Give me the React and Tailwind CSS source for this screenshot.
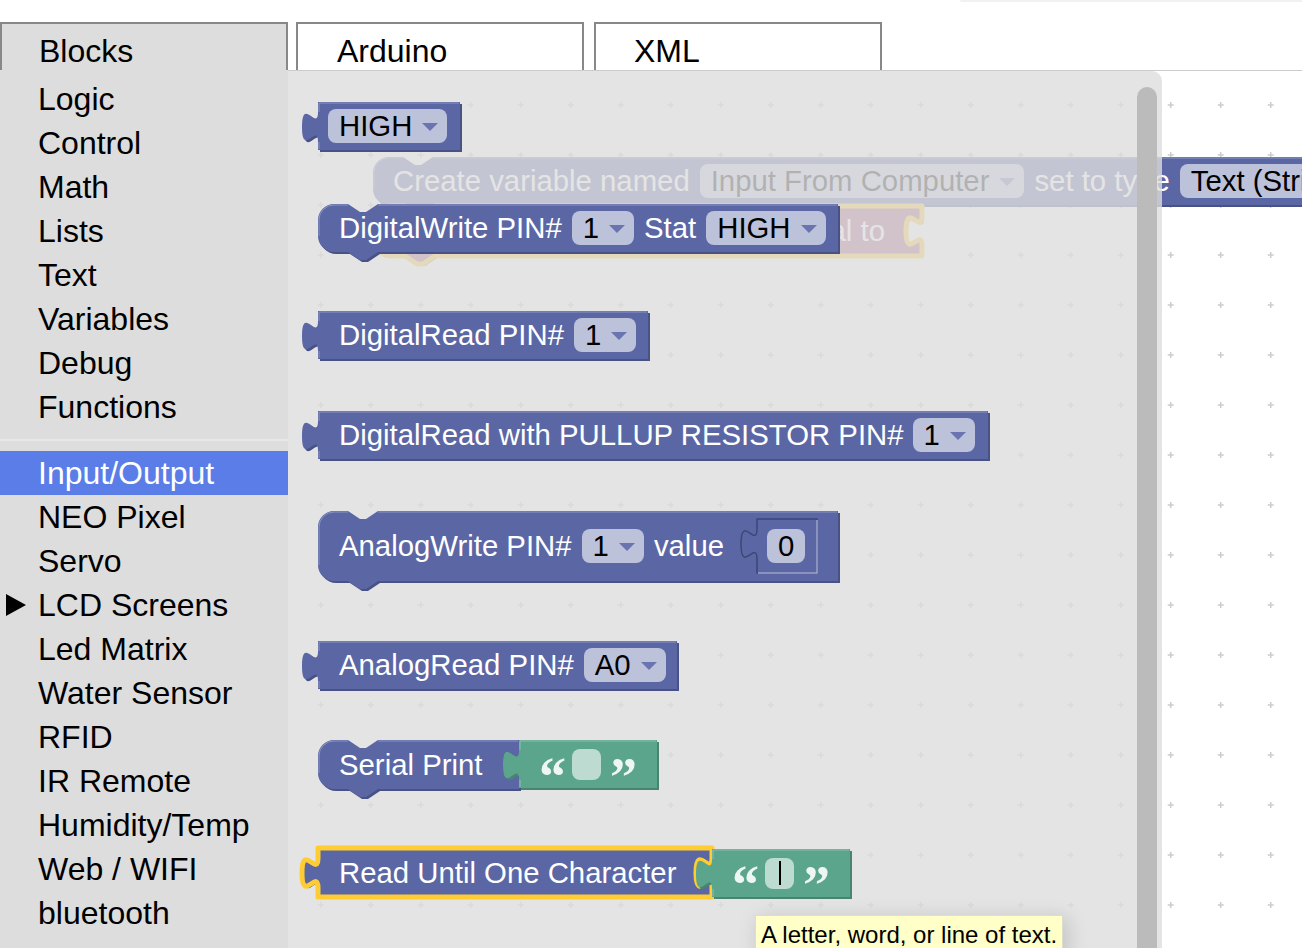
import React from 'react'

const PURPLE = { fill: '#5b67a5', dark: '#495284', light: '#8c95c0' }
const GREEN = { fill: '#5ba58c', dark: '#498470', light: '#8cc0af' }
const PINK = { fill: '#a55b80', dark: '#844966', light: '#c08ca6' }

const mainCategories = ['Logic', 'Control', 'Math', 'Lists', 'Text', 'Variables', 'Debug', 'Functions']
const hardwareCategories = [
  'Input/Output',
  'NEO Pixel',
  'Servo',
  'LCD Screens',
  'Led Matrix',
  'Water Sensor',
  'RFID',
  'IR Remote',
  'Humidity/Temp',
  'Web / WIFI',
  'bluetooth',
]

// blockly shapes, scaled x2
function blockPath(w, h, { output, prev, next, socket }) {
  let d = prev ? `M0,16 A16,16 0 0 1 16,0 H30 l12,8 6,0 12,-8 H${w}` : `M0,0 H${w}`
  if (socket) d += ` V10 C${w},30 ${w - 16},-6 ${w - 16},25 S${w},20 ${w},40`
  d += ` V${h}`
  d += next ? ` H60 l-12,8 -6,0 -12,-8 H16 A16,16 0 0 1 0,${h - 16}` : ' H0'
  if (output) d += ' V40 C0,20 -16,56 -16,25 C-16,-6 0,30 0,10'
  return d + ' Z'
}

function highlightPath(w, h, { output, prev }) {
  if (prev) return `M1,${h - 16} V16 A15,15 0 0 1 16,1 H30 M60,1 H${w - 1}`
  if (output) return `M1,10 V1 H${w - 1} M1,40 V${h - 1}`
  return `M1,${h - 1} V1 H${w - 1}`
}

function Block({ pos, w, h = 48, color = PURPLE, output, prev, next, socket, selected, inset, className = '', children }) {
  const shape = { output, prev, next, socket }
  const d = blockPath(w, h, shape)
  return (
    <div className={`${pos} shrink-0`}>
      <svg className="absolute left-0 top-0 overflow-visible" width={w} height={h}>
        {!inset && <path d={d} fill={color.dark} transform="translate(2 2)" />}
        <path
          d={d}
          fill={color.fill}
          stroke={selected ? '#ffcc33' : inset ? '#3e4675' : 'none'}
          strokeWidth={selected ? 5 : 1.5}
          strokeLinejoin="round"
        />
        {inset && <path d={`M${w},1 V${h} H1`} fill="none" stroke="#a3aad0" strokeWidth="1.5" />}
        {!selected && !inset && <path d={highlightPath(w, h, shape)} fill="none" stroke={color.light} strokeWidth="1" />}
      </svg>
      <div className={`relative flex h-full items-center whitespace-nowrap ${className}`}>{children}</div>
    </div>
  )
}

function Dropdown({ children }) {
  return (
    <span className="flex h-[34px] shrink-0 items-center gap-[9px] rounded-[8px] bg-[#bdc2db] pl-[11px] pr-[8px] text-black">
      {children}
      <svg width="18" height="10" viewBox="0 0 18 10" className="mt-[2px]">
        <path d="M1 1h16l-8 8z" fill="#6a74b0" />
      </svg>
    </span>
  )
}

function Quote({ children }) {
  return (
    <span className="block h-[54px] w-[24px] translate-y-[12px] text-center font-['Liberation_Serif',serif] text-[54px] font-bold leading-[54px] text-[#eef6f3]">
      {children}
    </span>
  )
}

function TextBlock({ pos, caret }) {
  return (
    <Block pos={pos} w={138} color={GREEN} output className="gap-[9px] pl-[20px]">
      <Quote>“</Quote>
      <span className="flex h-[31px] w-[29px] items-center justify-center rounded-[8px] bg-[#bddbd1]">
        {caret && <span className="h-[24px] w-[2px] bg-black" />}
      </span>
      <Quote>”</Quote>
    </Block>
  )
}

function Tab({ className, children }) {
  return (
    <div className={`box-border h-[48px] w-[288px] border-2 border-b-0 border-[#888] pt-[9px] text-[32px] leading-[36px] ${className}`}>
      {children}
    </div>
  )
}

function Category({ label, active, arrow }) {
  return (
    <div className={`flex h-[44px] items-center whitespace-nowrap ${active ? 'bg-[#5a7de8] text-white' : 'text-black'}`}>
      <span className="flex w-[38px] shrink-0 pl-[6px]">
        {arrow && (
          <svg width="20" height="22" viewBox="0 0 20 22">
            <polygon points="0,0 0,22 20,11" fill="#000" />
          </svg>
        )}
      </span>
      {label}
    </div>
  )
}

function Toolbox() {
  return (
    <aside className="w-[288px] shrink-0 bg-[#ddd] pt-[7px] text-[32px] leading-[44px]">
      {mainCategories.map((label) => (
        <Category key={label} label={label} />
      ))}
      <div className="my-[10px] h-[2px] bg-[#e8e8e8]" />
      {hardwareCategories.map((label) => (
        <Category key={label} label={label} active={label === 'Input/Output'} arrow={label === 'LCD Screens'} />
      ))}
    </aside>
  )
}

function Workspace() {
  return (
    <main className="relative flex-1 overflow-hidden border-t border-[#ccc] text-[29.33px] leading-[34px] text-white">
      <svg className="absolute inset-0 h-full w-full">
        <defs>
          <pattern id="grid" width="50" height="50" patternUnits="userSpaceOnUse">
            <path d="M29.7 34h6M32.7 31v6" stroke="#ccc" strokeWidth="1.5" />
          </pattern>
        </defs>
        <rect width="100%" height="100%" fill="url(#grid)" />
      </svg>

      {/* blocks on the workspace, behind the flyout */}
      <Block pos="absolute left-[85px] top-[86px] w-[1000px] h-[48px]" w={1000} prev next className="gap-[10px] pl-[20px]">
        Create variable named
        <Dropdown>Input From Computer</Dropdown>
        set to type
        <Dropdown>Text (String)</Dropdown>
      </Block>
      <Block
        pos="absolute left-[87px] top-[135px] w-[547px] h-[50px]"
        w={547}
        h={50}
        color={PINK}
        prev
        next
        socket
        selected
        className="justify-end pr-[37px]"
      >
        equal to
      </Block>

      {/* flyout */}
      <div className="absolute bottom-0 left-0 top-0 w-[874px] rounded-tr-[10px] bg-[#ddd]/80" />
      <div className="absolute bottom-[-10px] left-[849px] top-[16px] w-[20px] rounded-t-[10px] bg-[#bbb]" />

      <Block pos="absolute left-[30px] top-[31px] w-[142px] h-[48px]" w={142} output className="pl-[10px]">
        <Dropdown>HIGH</Dropdown>
      </Block>

      <Block pos="absolute left-[30px] top-[133px] w-[520px] h-[48px]" w={520} prev next className="gap-[10px] pl-[21px]">
        DigitalWrite PIN#
        <Dropdown>1</Dropdown>
        Stat
        <Dropdown>HIGH</Dropdown>
      </Block>

      <Block pos="absolute left-[30px] top-[240px] w-[330px] h-[48px]" w={330} output className="gap-[10px] pl-[21px]">
        DigitalRead PIN#
        <Dropdown>1</Dropdown>
      </Block>

      <Block pos="absolute left-[30px] top-[340px] w-[670px] h-[48px]" w={670} output className="gap-[9px] pl-[21px]">
        DigitalRead with PULLUP RESISTOR PIN#
        <Dropdown>1</Dropdown>
      </Block>

      <Block pos="absolute left-[30px] top-[440px] w-[520px] h-[70px]" w={520} h={70} prev next className="gap-[10px] pl-[21px]">
        AnalogWrite PIN#
        <Dropdown>1</Dropdown>
        value
        <Block pos="relative ml-[23px] w-[60px] h-[54px]" w={60} h={54} output inset className="pl-[10px]">
          <span className="flex h-[34px] items-center rounded-[8px] bg-[#bdc2db] px-[11px] text-black">0</span>
        </Block>
      </Block>

      <Block pos="absolute left-[30px] top-[570px] w-[359px] h-[48px]" w={359} output className="gap-[10px] pl-[21px]">
        AnalogRead PIN#
        <Dropdown>A0</Dropdown>
      </Block>

      <Block pos="absolute left-[30px] top-[669px] w-[201px] h-[49px]" w={201} h={49} prev next socket className="pl-[21px]">
        Serial Print
      </Block>
      <TextBlock pos="absolute left-[231px] top-[669px] w-[138px] h-[49px]" />

      <Block pos="absolute left-[30px] top-[777px] w-[394px] h-[49px]" w={394} h={49} output socket selected className="pl-[21px]">
        Read Until One Character
      </Block>
      <TextBlock pos="absolute left-[424px] top-[778px] w-[138px] h-[48px]" caret />

      <div className="absolute left-[467px] top-[844px] whitespace-nowrap border border-[#ddc] bg-[#ffffc7] px-[5px] pb-[6px] pt-[5px] text-[24px] leading-[28px] text-black shadow-[4px_4px_20px_1px_rgba(0,0,0,0.15)]">
        A letter, word, or line of text.
      </div>
    </main>
  )
}

export default function App() {
  return (
    <div className="h-[948px] w-[1302px] overflow-hidden bg-white font-['Liberation_Sans',Arial,sans-serif] text-black">
      <div className="flex h-[22px] justify-end">
        <div className="h-[2px] w-[342px] rounded-bl-[2px] bg-[#f1f1f1]" />
      </div>
      <div className="flex h-[48px]">
        <Tab className="bg-[#ddd] pl-[37px]">Blocks</Tab>
        <Tab className="ml-[8px] bg-white pl-[39px]">Arduino</Tab>
        <Tab className="ml-[10px] bg-white pl-[38px]">XML</Tab>
      </div>
      <div className="flex h-[878px]">
        <Toolbox />
        <Workspace />
      </div>
    </div>
  )
}
